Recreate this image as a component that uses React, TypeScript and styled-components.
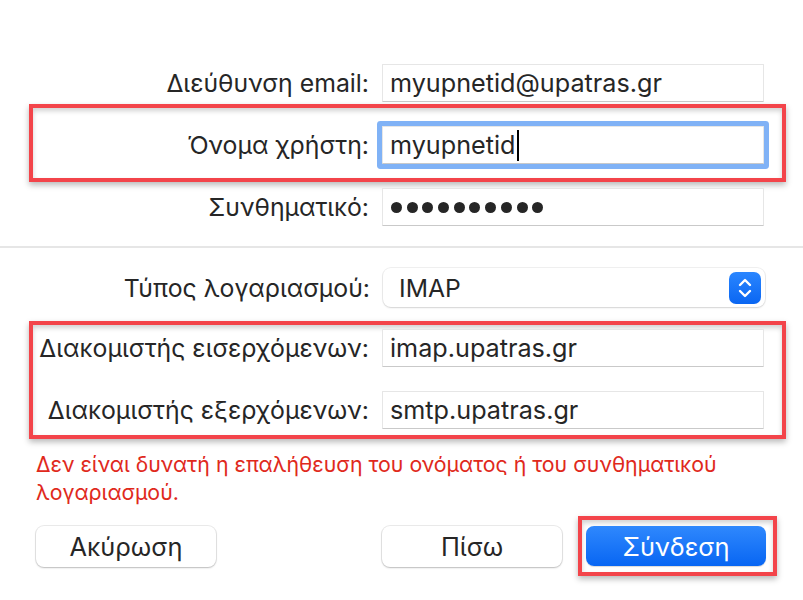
import React from "react";
import styled, { createGlobalStyle } from "styled-components";

const Global = createGlobalStyle`
  html, body { margin: 0; padding: 0; background: #ffffff; }
  body { font-family: Inter, "Noto Sans", "DejaVu Sans", sans-serif; color: #262626; }
`;

const Page = styled.div`
  width: 803px;
  height: 600px;
  box-sizing: border-box;
  padding-top: 64px;
  display: flex;
  flex-direction: column;
  overflow: hidden;
  background: #fff;
`;

const Row = styled.div<{ $right?: number; $mt?: number }>`
  display: grid;
  grid-template-columns: 1fr 382px;
  column-gap: 13px;
  align-items: center;
  margin-right: ${(p) => p.$right ?? 39}px;
  margin-top: ${(p) => p.$mt ?? 0}px;
`;

const Label = styled.div`
  text-align: right;
  white-space: nowrap;
  font-size: 24.8px;
  color: #262626;
`;

const Field = styled.div<{ $focused?: boolean }>`
  height: 38px;
  box-sizing: border-box;
  border: 1px solid #e6e6e6;
  border-bottom-color: #c9c9c9;
  background: #fff;
  display: flex;
  align-items: center;
  padding-left: 7px;
  font-size: 25.2px;
  color: #262626;
  border-radius: 1px;
  white-space: nowrap;
  overflow: hidden;
  box-shadow: ${(p) => (p.$focused ? "0 0 0 5px #80b2f6" : "none")};
`;

const Caret = styled.span`
  display: inline-block;
  width: 2px;
  height: 31px;
  background: #000;
  margin-left: 1px;
`;

const Dots = styled.div`
  display: flex;
  gap: 4.7px;
  padding-left: 1px;
`;

const Dot = styled.span`
  width: 11px;
  height: 11px;
  border-radius: 50%;
  background: #262626;
`;

const Annotation = styled.div<{ $pt: number; $pb: number; $mt: number }>`
  margin: ${(p) => p.$mt}px 17px 0 29px;
  border: 4px solid #f3444a;
  padding-top: ${(p) => p.$pt}px;
  padding-bottom: ${(p) => p.$pb}px;
  box-shadow: 0 3px 6px rgba(0, 0, 0, 0.28), inset 0 3px 5px rgba(0, 0, 0, 0.18);
  display: flex;
  flex-direction: column;
`;

const Separator = styled.div`
  height: 2px;
  background: #e6e6e6;
  margin: 20px 0 20px;
`;

const Popup = styled.div`
  height: 39px;
  box-sizing: border-box;
  border-radius: 8px;
  background: #fff;
  box-shadow: 0 0 0 1px rgba(0, 0, 0, 0.06), 0 1px 2px rgba(0, 0, 0, 0.12);
  display: flex;
  align-items: center;
  justify-content: space-between;
  padding: 0 4px 0 16px;
  font-size: 24.7px;
  color: #262626;
`;

const Stepper = styled.div`
  width: 32px;
  height: 32px;
  border-radius: 7px;
  background: linear-gradient(#2a86ff, #0a66f2);
  display: flex;
  align-items: center;
  justify-content: center;
`;

const ErrorText = styled.div`
  margin: 11px 30px 0 36px;
  color: #e0291c;
  font-size: 21.3px;
  line-height: 28px;
`;

const ButtonRow = styled.div`
  display: flex;
  align-items: center;
  margin-top: 10px;
  padding-left: 36px;
`;

const Button = styled.div<{ $ml?: number }>`
  width: 180px;
  height: 41px;
  box-sizing: border-box;
  border-radius: 8px;
  background: #fff;
  box-shadow: 0 0 0 1px rgba(0, 0, 0, 0.08), 0 1px 2px rgba(0, 0, 0, 0.2);
  display: flex;
  align-items: center;
  justify-content: center;
  font-size: 25.4px;
  color: #262626;
  margin-left: ${(p) => p.$ml ?? 0}px;
`;

const PrimaryButton = styled(Button)`
  height: 40px;
  background: linear-gradient(#2f88fd, #0866f3);
  color: #fff;
  box-shadow: 0 1px 1px rgba(0, 0, 0, 0.15);
`;

const ButtonMark = styled.div`
  margin-left: 16px;
  border: 4px solid #f3444a;
  padding: 6px 7px 6px 4px;
  box-shadow: 0 3px 6px rgba(0, 0, 0, 0.28), inset 0 3px 5px rgba(0, 0, 0, 0.18);
`;

export default function App() {
  return (
    <>
      <Global />
      <Page>
        <Row>
          <Label>Διεύθυνση email:</Label>
          <Field>myupnetid@upatras.gr</Field>
        </Row>
        <Annotation $pt={18} $pb={14} $mt={2}>
          <Row $right={18}>
            <Label>Όνομα χρήστη:</Label>
            <Field $focused>
              myupnetid
              <Caret />
            </Field>
          </Row>
        </Annotation>
        <Row $mt={6}>
          <Label>Συνθηματικό:</Label>
          <Field>
            <Dots>
              {Array.from({ length: 10 }).map((_, i) => (
                <Dot key={i} />
              ))}
            </Dots>
          </Field>
        </Row>
        <Separator />
        <Row $right={38}>
          <Label>Τύπος λογαριασμού:</Label>
          <Popup>
            IMAP
            <Stepper>
              <svg width="16" height="22" viewBox="0 0 16 22" fill="none">
                <path d="M3 8 L8 3 L13 8" stroke="#fff" strokeWidth="2.4" strokeLinecap="round" strokeLinejoin="round" />
                <path d="M3 14 L8 19 L13 14" stroke="#fff" strokeWidth="2.4" strokeLinecap="round" strokeLinejoin="round" />
              </svg>
            </Stepper>
          </Popup>
        </Row>
        <Annotation $pt={4} $pb={6} $mt={14}>
          <Row $right={18}>
            <Label>Διακομιστής εισερχόμενων:</Label>
            <Field>imap.upatras.gr</Field>
          </Row>
          <Row $right={18} $mt={24}>
            <Label>Διακομιστής εξερχόμενων:</Label>
            <Field>smtp.upatras.gr</Field>
          </Row>
        </Annotation>
        <ErrorText>
          Δεν είναι δυνατή η επαλήθευση του ονόματος ή του συνθηματικού λογαριασμού.
        </ErrorText>
        <ButtonRow>
          <Button>Ακύρωση</Button>
          <Button $ml={166}>Πίσω</Button>
          <ButtonMark>
            <PrimaryButton>Σύνδεση</PrimaryButton>
          </ButtonMark>
        </ButtonRow>
      </Page>
    </>
  );
}
